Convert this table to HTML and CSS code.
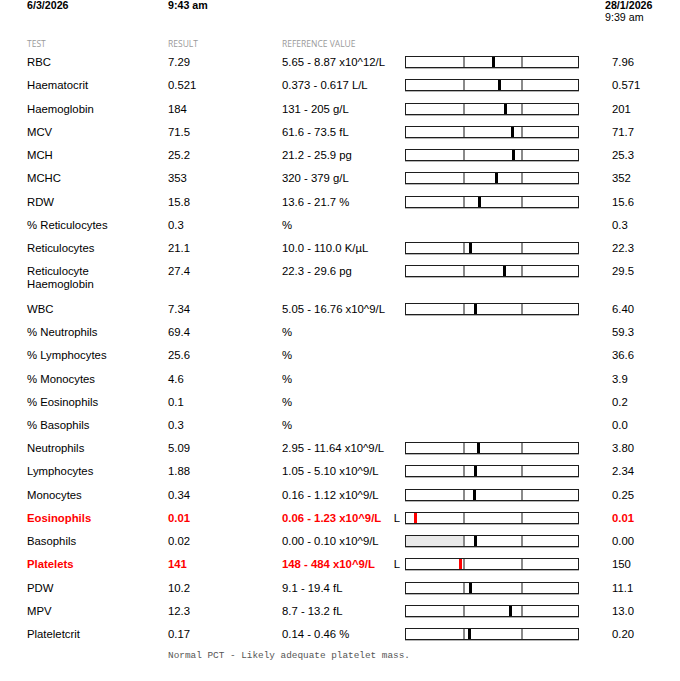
FILE: index.html
```html
<!DOCTYPE html>
<html>
<head>
<meta charset="utf-8">
<link rel="stylesheet" href="styles.css">
</head>
<body>
<div class="page">
  <div class="head">
    <div class="b">6/3/2026</div>
    <div class="b">9:43 am</div>
    <div class="prevdate"><div class="b">28/1/2026</div><div>9:39 am</div></div>
  </div>
  <div class="cols">
    <div>TEST</div><div>RESULT</div><div class="span">REFERENCE VALUE</div>
  </div>
  <div class="table">
    <div class="row"><div>RBC</div><div>7.29</div><div>5.65 - 8.87 x10^12/L</div><div class="flag"></div><div class="bar"><div class="seg"></div><div class="seg"></div><div class="seg"></div><div class="mark" style="left:85.8px"></div></div><div></div><div>7.96</div></div>
    <div class="row"><div>Haematocrit</div><div>0.521</div><div>0.373 - 0.617 L/L</div><div class="flag"></div><div class="bar"><div class="seg"></div><div class="seg"></div><div class="seg"></div><div class="mark" style="left:91.8px"></div></div><div></div><div>0.571</div></div>
    <div class="row"><div>Haemoglobin</div><div>184</div><div>131 - 205 g/L</div><div class="flag"></div><div class="bar"><div class="seg"></div><div class="seg"></div><div class="seg"></div><div class="mark" style="left:97.8px"></div></div><div></div><div>201</div></div>
    <div class="row"><div>MCV</div><div>71.5</div><div>61.6 - 73.5 fL</div><div class="flag"></div><div class="bar"><div class="seg"></div><div class="seg"></div><div class="seg"></div><div class="mark" style="left:104.8px"></div></div><div></div><div>71.7</div></div>
    <div class="row"><div>MCH</div><div>25.2</div><div>21.2 - 25.9 pg</div><div class="flag"></div><div class="bar"><div class="seg"></div><div class="seg"></div><div class="seg"></div><div class="mark" style="left:105.8px"></div></div><div></div><div>25.3</div></div>
    <div class="row"><div>MCHC</div><div>353</div><div>320 - 379 g/L</div><div class="flag"></div><div class="bar"><div class="seg"></div><div class="seg"></div><div class="seg"></div><div class="mark" style="left:88.8px"></div></div><div></div><div>352</div></div>
    <div class="row"><div>RDW</div><div>15.8</div><div>13.6 - 21.7 %</div><div class="flag"></div><div class="bar"><div class="seg"></div><div class="seg"></div><div class="seg"></div><div class="mark" style="left:71.8px"></div></div><div></div><div>15.6</div></div>
    <div class="row"><div>% Reticulocytes</div><div>0.3</div><div>%</div><div class="flag"></div><div></div><div></div><div>0.3</div></div>
    <div class="row"><div>Reticulocytes</div><div>21.1</div><div>10.0 - 110.0 K/µL</div><div class="flag"></div><div class="bar"><div class="seg"></div><div class="seg"></div><div class="seg"></div><div class="mark" style="left:62.8px"></div></div><div></div><div>22.3</div></div>
    <div class="row tall"><div>Reticulocyte<br>Haemoglobin</div><div>27.4</div><div>22.3 - 29.6 pg</div><div class="flag"></div><div class="bar"><div class="seg"></div><div class="seg"></div><div class="seg"></div><div class="mark" style="left:96.8px"></div></div><div></div><div>29.5</div></div>
    <div class="row"><div>WBC</div><div>7.34</div><div>5.05 - 16.76 x10^9/L</div><div class="flag"></div><div class="bar"><div class="seg"></div><div class="seg"></div><div class="seg"></div><div class="mark" style="left:67.8px"></div></div><div></div><div>6.40</div></div>
    <div class="row"><div>% Neutrophils</div><div>69.4</div><div>%</div><div class="flag"></div><div></div><div></div><div>59.3</div></div>
    <div class="row"><div>% Lymphocytes</div><div>25.6</div><div>%</div><div class="flag"></div><div></div><div></div><div>36.6</div></div>
    <div class="row"><div>% Monocytes</div><div>4.6</div><div>%</div><div class="flag"></div><div></div><div></div><div>3.9</div></div>
    <div class="row"><div>% Eosinophils</div><div>0.1</div><div>%</div><div class="flag"></div><div></div><div></div><div>0.2</div></div>
    <div class="row"><div>% Basophils</div><div>0.3</div><div>%</div><div class="flag"></div><div></div><div></div><div>0.0</div></div>
    <div class="row"><div>Neutrophils</div><div>5.09</div><div>2.95 - 11.64 x10^9/L</div><div class="flag"></div><div class="bar"><div class="seg"></div><div class="seg"></div><div class="seg"></div><div class="mark" style="left:70.8px"></div></div><div></div><div>3.80</div></div>
    <div class="row"><div>Lymphocytes</div><div>1.88</div><div>1.05 - 5.10 x10^9/L</div><div class="flag"></div><div class="bar"><div class="seg"></div><div class="seg"></div><div class="seg"></div><div class="mark" style="left:67.8px"></div></div><div></div><div>2.34</div></div>
    <div class="row"><div>Monocytes</div><div>0.34</div><div>0.16 - 1.12 x10^9/L</div><div class="flag"></div><div class="bar"><div class="seg"></div><div class="seg"></div><div class="seg"></div><div class="mark" style="left:66.8px"></div></div><div></div><div>0.25</div></div>
    <div class="row"><div class="abn">Eosinophils</div><div class="abn">0.01</div><div class="abn">0.06 - 1.23 x10^9/L</div><div class="flag">L</div><div class="bar"><div class="seg"></div><div class="seg"></div><div class="seg"></div><div class="mark red" style="left:7.8px"></div></div><div></div><div class="abn">0.01</div></div>
    <div class="row"><div>Basophils</div><div>0.02</div><div>0.00 - 0.10 x10^9/L</div><div class="flag"></div><div class="bar"><div class="seg shade"></div><div class="seg"></div><div class="seg"></div><div class="mark" style="left:67.8px"></div></div><div></div><div>0.00</div></div>
    <div class="row"><div class="abn">Platelets</div><div class="abn">141</div><div class="abn">148 - 484 x10^9/L</div><div class="flag">L</div><div class="bar"><div class="seg"></div><div class="seg"></div><div class="seg"></div><div class="mark red" style="left:53.2px"></div></div><div></div><div>150</div></div>
    <div class="row"><div>PDW</div><div>10.2</div><div>9.1 - 19.4 fL</div><div class="flag"></div><div class="bar"><div class="seg"></div><div class="seg"></div><div class="seg"></div><div class="mark" style="left:62.8px"></div></div><div></div><div>11.1</div></div>
    <div class="row"><div>MPV</div><div>12.3</div><div>8.7 - 13.2 fL</div><div class="flag"></div><div class="bar"><div class="seg"></div><div class="seg"></div><div class="seg"></div><div class="mark" style="left:102.8px"></div></div><div></div><div>13.0</div></div>
    <div class="row"><div>Plateletcrit</div><div>0.17</div><div>0.14 - 0.46 %</div><div class="flag"></div><div class="bar"><div class="seg"></div><div class="seg"></div><div class="seg"></div><div class="mark" style="left:61.8px"></div></div><div></div><div>0.20</div></div>
  </div>
  <div class="note">Normal PCT - Likely adequate platelet mass.</div>
</div>
</body>
</html>
```
FILE: styles.css
```css
html, body {
  margin: 0;
  padding: 0;
  background: #fff;
}
.page {
  padding-left: 27px;
  font-family: "Liberation Sans", Arial, sans-serif;
  color: #000;
}
.head {
  display: grid;
  grid-template-columns: 141px 437px 1fr;
  font-size: 10.67px;
  line-height: 11.5px;
}
.b {
  font-weight: bold;
}
.cols {
  display: grid;
  grid-template-columns: 141px 114px 1fr;
  margin-top: 15px;
  font-family: "Open Sans", sans-serif;
  font-size: 8.5px;
  line-height: 11.6px;
  color: #9a9a9a;
}
.table {
  margin-top: 1.6px;
}
.row {
  display: grid;
  grid-template-columns: 141px 114px 108px 15px 174px 33px 1fr;
  align-items: start;
  padding: 5px 0 5.22px;
  font-size: 11.33px;
  line-height: 13px;
}
.row.tall {
  padding-bottom: 6.72px;
}
.flag {
  text-align: right;
  padding-right: 5px;
}
.abn {
  color: #f00;
  font-weight: bold;
}
.bar {
  position: relative;
  display: grid;
  grid-template-columns: 56.5px 58px 1fr;
  height: 12px;
  box-sizing: border-box;
  border: 1px solid #1e1e1e;
  box-shadow: 0 1px 0 #b4b4b4;
}
.seg + .seg {
  border-left: 2px solid #8a8a8a;
}
.seg.shade {
  background: #e9e9e9;
}
.mark {
  position: absolute;
  top: 0;
  bottom: 0;
  width: 3px;
  background: #000;
}
.mark.red {
  background: #f00;
}
.note {
  margin-top: 5px;
  padding-left: 141px;
  font-family: "Liberation Mono", "Courier New", monospace;
  font-size: 9.4px;
  line-height: 10.6px;
  color: #555;
}
```
